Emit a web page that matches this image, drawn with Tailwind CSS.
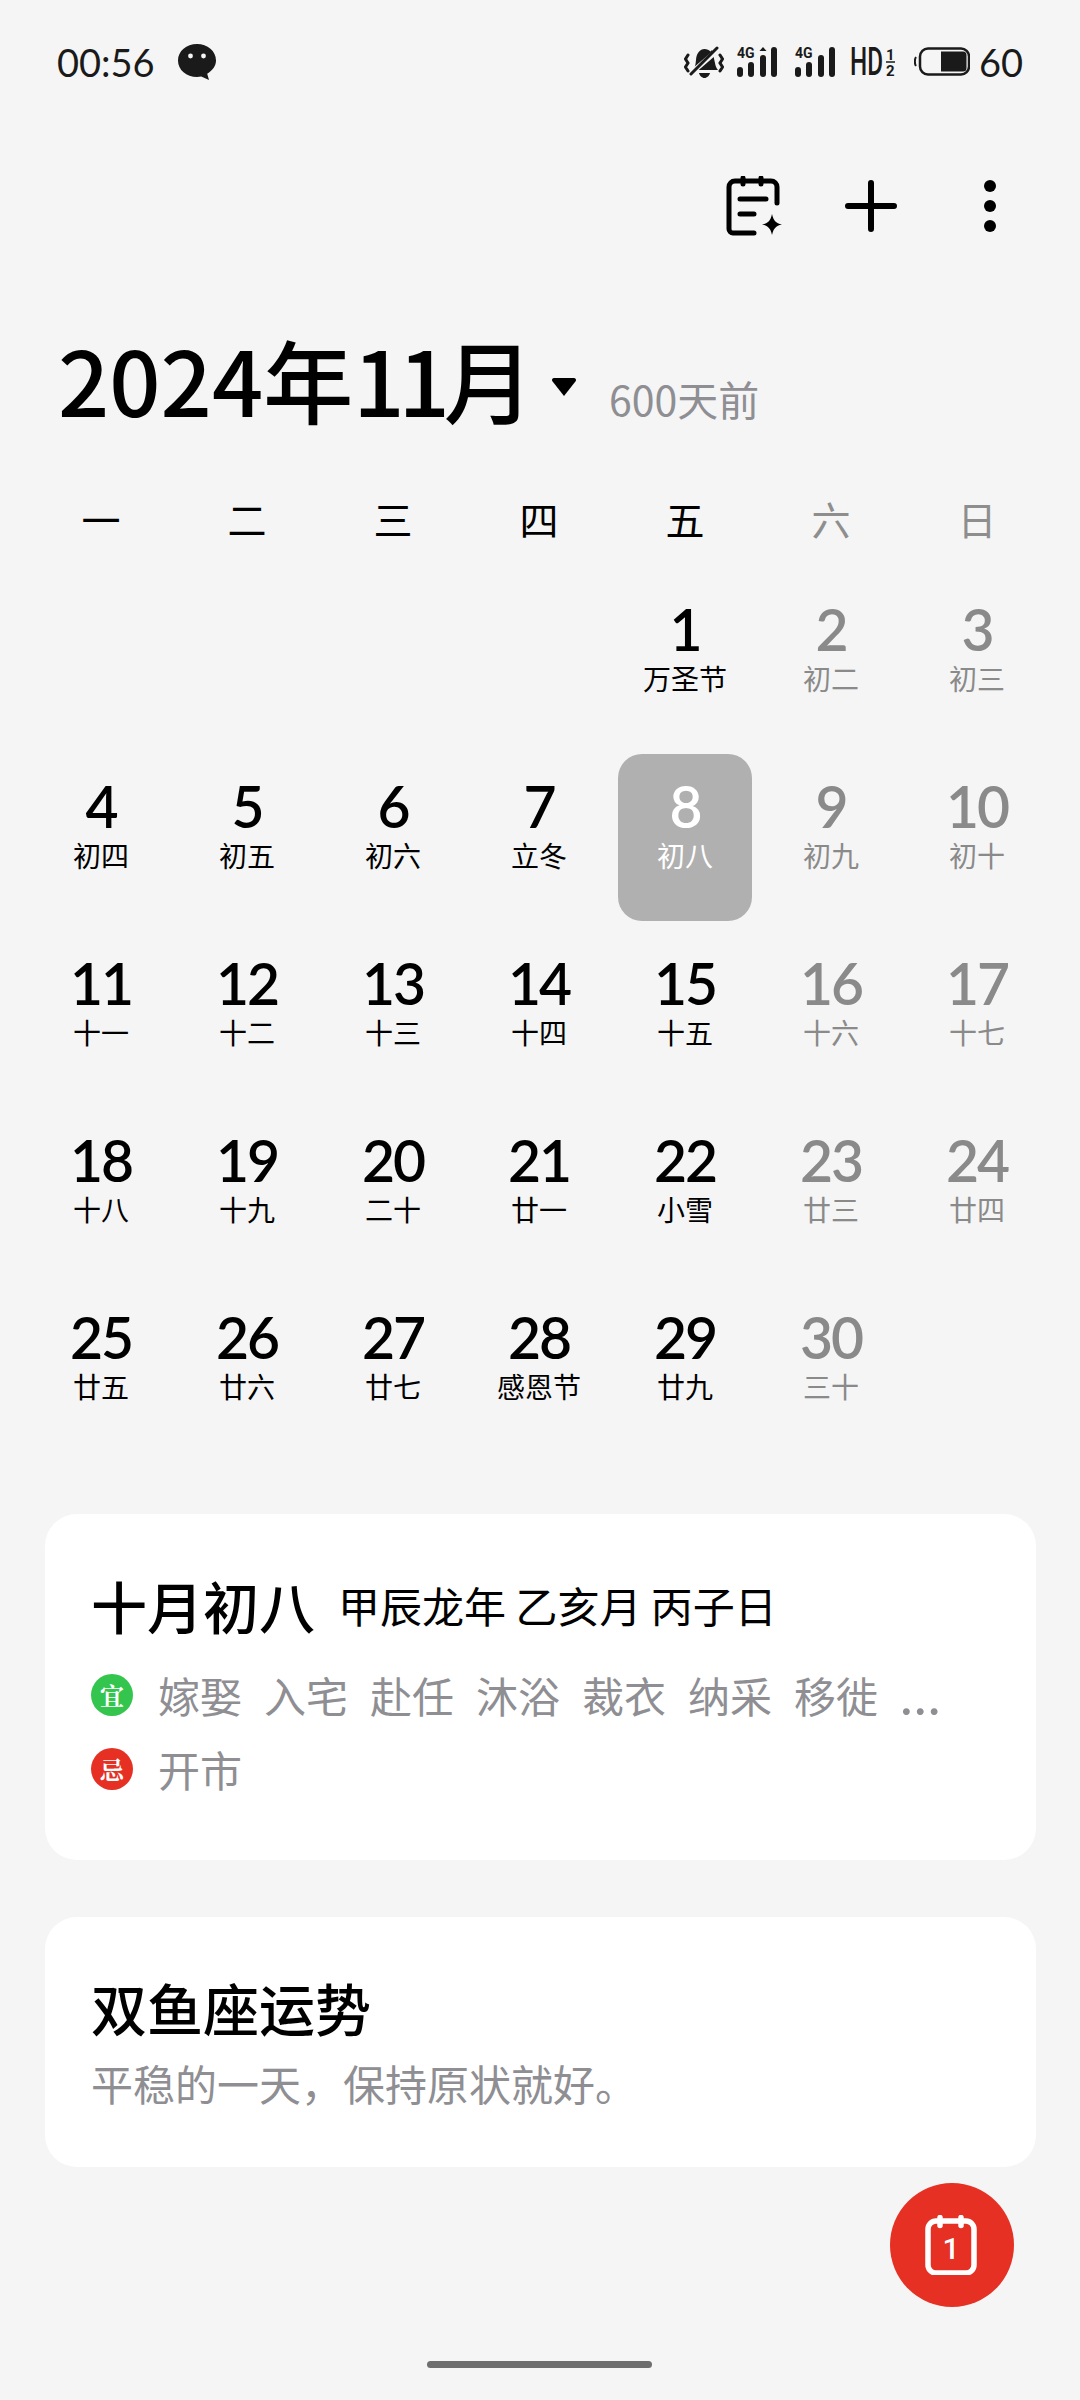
<!doctype html>
<html lang="zh-CN">
<head>
<meta charset="utf-8">
<script src="https://cdn.jsdelivr.net/npm/@tailwindcss/browser@4"></script>
</head>
<body>
<div class="relative w-[1080px] h-[2400px] overflow-hidden bg-[#f5f5f5] text-black font-['Lato','Noto_Sans_CJK_SC',sans-serif]">

  <!-- status bar -->
  <div class="h-[124px] pl-[57px] pr-[57px] flex items-center justify-between text-[#1a1a1a]">
    <div class="flex items-center">
      <span class="text-[38px] leading-none">00:56</span>
      <svg class="ml-[23px]" width="38" height="36" viewBox="0 0 38 36"><path fill="#1a1a1a" d="M19 0C8.500 0 0 7 0 16.500S8.500 33 19 33c1.500 0 3-.2 4.300-.5L31 36l-1.800-6.300C34.500 26.500 38 22 38 16.500 38 7 29.500 0 19 0Z"/><circle cx="12.500" cy="12" r="2.400" fill="#f5f5f5"/><circle cx="25.500" cy="12" r="2.400" fill="#f5f5f5"/></svg>
    </div>
    <div class="flex items-center">
      <svg width="40" height="33" viewBox="0 0 40 33" fill="none"><path fill="#1a1a1a" d="M9 24c2-2 2.500-5 3-10C12.500 7 16 3 20.500 3c2.500 0 4.500 1 6 2.500L28 4l3 13c.5 3 1.500 5.500 3 7ZM15 27h11c-.5 2.500-3 5-5.500 5S15.500 29.500 15 27Z"/><path stroke="#f5f5f5" stroke-width="5" d="M5 29 35 3"/><path stroke="#1a1a1a" stroke-width="3" stroke-linecap="round" d="M7 28 33 2"/><path stroke="#1a1a1a" stroke-width="3" stroke-linecap="round" d="M4 9 1.500 13 4 17 1.500 21 4 25M36 9l2.500 4L36 17l2.500 4L36 25"/></svg>
      <svg class="ml-[13px]" width="41" height="32" viewBox="0 0 41 32"><text x="0" y="12" font-family="Roboto" font-weight="700" font-size="14" fill="#1a1a1a">4G</text><rect x="0" y="21" width="6" height="10" rx="3" fill="#1a1a1a"/><rect x="11" y="16" width="6" height="15" rx="3" fill="#1a1a1a"/><rect x="23" y="9" width="6" height="22" rx="3" fill="#1a1a1a"/><path d="M26 1l3.500 4h-7Z" fill="#1a1a1a"/><rect x="34" y="1" width="6" height="30" rx="3" fill="#1a1a1a"/></svg>
      <svg class="ml-[17px]" width="41" height="32" viewBox="0 0 41 32"><text x="0" y="12" font-family="Roboto" font-weight="700" font-size="14" fill="#1a1a1a">4G</text><rect x="0" y="21" width="6" height="10" rx="3" fill="#1a1a1a"/><rect x="11" y="16" width="6" height="15" rx="3" fill="#1a1a1a"/><rect x="23" y="9" width="6" height="22" rx="3" fill="#1a1a1a"/><rect x="34" y="1" width="6" height="30" rx="3" fill="#1a1a1a"/></svg>
      <svg class="ml-[14px] overflow-visible" width="46" height="30" viewBox="0 0 46 30"><text x="0" y="28" font-family="Roboto" font-weight="500" font-size="38" textLength="33" lengthAdjust="spacingAndGlyphs" fill="#1a1a1a">HD</text><text x="36" y="13" font-family="Roboto" font-weight="700" font-size="15" fill="#1a1a1a">1</text><path d="M36 15h9" stroke="#1a1a1a" stroke-width="1.500"/><text x="36" y="29" font-family="Roboto" font-weight="700" font-size="15" fill="#1a1a1a">2</text></svg>
      <svg class="ml-[18px]" width="56" height="30" viewBox="0 0 56 30" fill="none"><rect x="6" y="1.500" width="49" height="26" rx="8" stroke="#1a1a1a" stroke-width="2.500"/><path d="M27 4.500h22a3.500 3.500 0 0 1 3.500 3.500v13a3.500 3.500 0 0 1-3.500 3.500H27Z" fill="#1a1a1a"/><path d="M2 10c-1.500 2-1.500 7 0 9" stroke="#1a1a1a" stroke-width="2"/></svg>
      <span class="ml-[9px] text-[38px] leading-none">60</span>
    </div>
  </div>

  <!-- toolbar -->
  <div class="mt-[50px] h-[64px] pl-[726px] flex items-center">
    <svg width="58" height="60" viewBox="0 0 58 60" fill="none" stroke="#000" stroke-width="5" stroke-linecap="round">
      <path d="M51 27V11a6 6 0 0 0-6-6H9a6 6 0 0 0-6 6v42a4 4 0 0 0 4 4h21"/>
      <path d="M17 2v6M35 2v6M14 23h26M14 38h14"/>
      <path d="M46 38c1.500 6.500 3.500 9 10 10.500-6.500 1.500-8.500 4-10 10.500-1.500-6.500-3.500-9-10-10.500 6.500-1.500 8.500-4 10-10.500Z" fill="#000" stroke="none"/>
    </svg>
    <svg class="ml-[60px]" width="54" height="54" viewBox="0 0 54 54" fill="none" stroke="#000" stroke-width="6" stroke-linecap="round"><path d="M27 4v46M4 27h46"/></svg>
    <svg class="ml-[85px]" width="14" height="54" viewBox="0 0 14 54" fill="#000"><circle cx="7" cy="7" r="6"/><circle cx="7" cy="27" r="6"/><circle cx="7" cy="47" r="6"/></svg>
  </div>

  <!-- title -->
  <div class="mt-[94px] h-[103px] pl-[58px] relative">
    <span class="block text-[90px] leading-[92px] font-medium font-['Noto_Sans_CJK_SC',sans-serif]">2024年<span class="tracking-[-6px]">11月</span></span>
    <svg class="absolute left-[551px] top-[45px]" width="26" height="20" viewBox="0 0 26 20"><path d="M3 1h20c1.500 0 2.500 1.500 1.800 3L13 19 1.200 4C.5 2.500 1.500 1 3 1Z" fill="#000"/></svg>
    <span class="absolute left-[609px] top-[36px] text-[41px] leading-[60px] text-[#8e8e93] font-['Noto_Sans_CJK_SC',sans-serif]">600天前</span>
  </div>

  <!-- weekdays -->
  <div class="mt-[53px] pl-[28px] pr-[30px] grid grid-cols-7 h-[60px] items-center text-center text-[39px] leading-[60px] font-['Noto_Sans_CJK_SC',sans-serif]">
    <div>一</div><div>二</div><div>三</div><div>四</div><div>五</div>
    <div class="text-[#8e8e8e]">六</div><div class="text-[#8e8e8e]">日</div>
  </div>

  <!-- days -->
  <div class="mt-[29px] pl-[28px] pr-[30px] grid grid-cols-7 auto-rows-[167px] gap-y-[10px] justify-items-center text-center">
    <div></div><div></div><div></div><div></div>
    <div class="w-[134px] pt-[21px]"><div class="text-[57px] leading-[62px] font-semibold tracking-[-2px]">1</div><div class="text-[28px] leading-[36px] font-['Noto_Sans_CJK_SC',sans-serif]">万圣节</div></div>
    <div class="w-[134px] pt-[21px] text-[#8a8a8a]"><div class="text-[57px] leading-[62px] font-semibold tracking-[-2px]">2</div><div class="text-[28px] leading-[36px] font-['Noto_Sans_CJK_SC',sans-serif]">初二</div></div>
    <div class="w-[134px] pt-[21px] text-[#8a8a8a]"><div class="text-[57px] leading-[62px] font-semibold tracking-[-2px]">3</div><div class="text-[28px] leading-[36px] font-['Noto_Sans_CJK_SC',sans-serif]">初三</div></div>

    <div class="w-[134px] pt-[21px]"><div class="text-[57px] leading-[62px] font-semibold tracking-[-2px]">4</div><div class="text-[28px] leading-[36px] font-['Noto_Sans_CJK_SC',sans-serif]">初四</div></div>
    <div class="w-[134px] pt-[21px]"><div class="text-[57px] leading-[62px] font-semibold tracking-[-2px]">5</div><div class="text-[28px] leading-[36px] font-['Noto_Sans_CJK_SC',sans-serif]">初五</div></div>
    <div class="w-[134px] pt-[21px]"><div class="text-[57px] leading-[62px] font-semibold tracking-[-2px]">6</div><div class="text-[28px] leading-[36px] font-['Noto_Sans_CJK_SC',sans-serif]">初六</div></div>
    <div class="w-[134px] pt-[21px]"><div class="text-[57px] leading-[62px] font-semibold tracking-[-2px]">7</div><div class="text-[28px] leading-[36px] font-['Noto_Sans_CJK_SC',sans-serif]">立冬</div></div>
    <div class="w-[134px] pt-[21px] bg-[#b0b0b0] text-white rounded-[24px]"><div class="text-[57px] leading-[62px] font-semibold tracking-[-2px]">8</div><div class="text-[28px] leading-[36px] font-['Noto_Sans_CJK_SC',sans-serif]">初八</div></div>
    <div class="w-[134px] pt-[21px] text-[#8a8a8a]"><div class="text-[57px] leading-[62px] font-semibold tracking-[-2px]">9</div><div class="text-[28px] leading-[36px] font-['Noto_Sans_CJK_SC',sans-serif]">初九</div></div>
    <div class="w-[134px] pt-[21px] text-[#8a8a8a]"><div class="text-[57px] leading-[62px] font-semibold tracking-[-2px]">10</div><div class="text-[28px] leading-[36px] font-['Noto_Sans_CJK_SC',sans-serif]">初十</div></div>

    <div class="w-[134px] pt-[21px]"><div class="text-[57px] leading-[62px] font-semibold tracking-[-2px]">11</div><div class="text-[28px] leading-[36px] font-['Noto_Sans_CJK_SC',sans-serif]">十一</div></div>
    <div class="w-[134px] pt-[21px]"><div class="text-[57px] leading-[62px] font-semibold tracking-[-2px]">12</div><div class="text-[28px] leading-[36px] font-['Noto_Sans_CJK_SC',sans-serif]">十二</div></div>
    <div class="w-[134px] pt-[21px]"><div class="text-[57px] leading-[62px] font-semibold tracking-[-2px]">13</div><div class="text-[28px] leading-[36px] font-['Noto_Sans_CJK_SC',sans-serif]">十三</div></div>
    <div class="w-[134px] pt-[21px]"><div class="text-[57px] leading-[62px] font-semibold tracking-[-2px]">14</div><div class="text-[28px] leading-[36px] font-['Noto_Sans_CJK_SC',sans-serif]">十四</div></div>
    <div class="w-[134px] pt-[21px]"><div class="text-[57px] leading-[62px] font-semibold tracking-[-2px]">15</div><div class="text-[28px] leading-[36px] font-['Noto_Sans_CJK_SC',sans-serif]">十五</div></div>
    <div class="w-[134px] pt-[21px] text-[#8a8a8a]"><div class="text-[57px] leading-[62px] font-semibold tracking-[-2px]">16</div><div class="text-[28px] leading-[36px] font-['Noto_Sans_CJK_SC',sans-serif]">十六</div></div>
    <div class="w-[134px] pt-[21px] text-[#8a8a8a]"><div class="text-[57px] leading-[62px] font-semibold tracking-[-2px]">17</div><div class="text-[28px] leading-[36px] font-['Noto_Sans_CJK_SC',sans-serif]">十七</div></div>

    <div class="w-[134px] pt-[21px]"><div class="text-[57px] leading-[62px] font-semibold tracking-[-2px]">18</div><div class="text-[28px] leading-[36px] font-['Noto_Sans_CJK_SC',sans-serif]">十八</div></div>
    <div class="w-[134px] pt-[21px]"><div class="text-[57px] leading-[62px] font-semibold tracking-[-2px]">19</div><div class="text-[28px] leading-[36px] font-['Noto_Sans_CJK_SC',sans-serif]">十九</div></div>
    <div class="w-[134px] pt-[21px]"><div class="text-[57px] leading-[62px] font-semibold tracking-[-2px]">20</div><div class="text-[28px] leading-[36px] font-['Noto_Sans_CJK_SC',sans-serif]">二十</div></div>
    <div class="w-[134px] pt-[21px]"><div class="text-[57px] leading-[62px] font-semibold tracking-[-2px]">21</div><div class="text-[28px] leading-[36px] font-['Noto_Sans_CJK_SC',sans-serif]">廿一</div></div>
    <div class="w-[134px] pt-[21px]"><div class="text-[57px] leading-[62px] font-semibold tracking-[-2px]">22</div><div class="text-[28px] leading-[36px] font-['Noto_Sans_CJK_SC',sans-serif]">小雪</div></div>
    <div class="w-[134px] pt-[21px] text-[#8a8a8a]"><div class="text-[57px] leading-[62px] font-semibold tracking-[-2px]">23</div><div class="text-[28px] leading-[36px] font-['Noto_Sans_CJK_SC',sans-serif]">廿三</div></div>
    <div class="w-[134px] pt-[21px] text-[#8a8a8a]"><div class="text-[57px] leading-[62px] font-semibold tracking-[-2px]">24</div><div class="text-[28px] leading-[36px] font-['Noto_Sans_CJK_SC',sans-serif]">廿四</div></div>

    <div class="w-[134px] pt-[21px]"><div class="text-[57px] leading-[62px] font-semibold tracking-[-2px]">25</div><div class="text-[28px] leading-[36px] font-['Noto_Sans_CJK_SC',sans-serif]">廿五</div></div>
    <div class="w-[134px] pt-[21px]"><div class="text-[57px] leading-[62px] font-semibold tracking-[-2px]">26</div><div class="text-[28px] leading-[36px] font-['Noto_Sans_CJK_SC',sans-serif]">廿六</div></div>
    <div class="w-[134px] pt-[21px]"><div class="text-[57px] leading-[62px] font-semibold tracking-[-2px]">27</div><div class="text-[28px] leading-[36px] font-['Noto_Sans_CJK_SC',sans-serif]">廿七</div></div>
    <div class="w-[134px] pt-[21px]"><div class="text-[57px] leading-[62px] font-semibold tracking-[-2px]">28</div><div class="text-[28px] leading-[36px] font-['Noto_Sans_CJK_SC',sans-serif]">感恩节</div></div>
    <div class="w-[134px] pt-[21px]"><div class="text-[57px] leading-[62px] font-semibold tracking-[-2px]">29</div><div class="text-[28px] leading-[36px] font-['Noto_Sans_CJK_SC',sans-serif]">廿九</div></div>
    <div class="w-[134px] pt-[21px] text-[#8a8a8a]"><div class="text-[57px] leading-[62px] font-semibold tracking-[-2px]">30</div><div class="text-[28px] leading-[36px] font-['Noto_Sans_CJK_SC',sans-serif]">三十</div></div>
    <div></div>
  </div>

  <!-- almanac card -->
  <div class="mt-[62px] ml-[45px] mr-[44px] h-[346px] bg-white rounded-[32px] pl-[46px] pt-[55px] font-['Noto_Sans_CJK_SC',sans-serif]">
    <div class="flex items-center h-[72px]">
      <span class="text-[56px] leading-[72px] font-medium">十月初八</span>
      <span class="ml-[23px] text-[42px] leading-[72px]">甲辰龙年 乙亥月 丙子日</span>
    </div>
    <div class="mt-[24px] flex items-center h-[60px]">
      <span class="w-[42px] h-[42px] shrink-0 rounded-full bg-[#34c54f] text-white text-[24px] leading-[42px] text-center font-['Noto_Serif_CJK_SC','Noto_Sans_CJK_SC',serif] font-bold">宜</span>
      <div class="ml-[25px] flex gap-x-[22px] text-[42px] leading-[60px] text-[#8e8e93]">
        <span>嫁娶</span><span>入宅</span><span>赴任</span><span>沐浴</span><span>裁衣</span><span>纳采</span><span>移徙</span><span class="text-[54px] font-['Lato']">…</span>
      </div>
    </div>
    <div class="mt-[14px] flex items-center h-[60px]">
      <span class="w-[42px] h-[42px] shrink-0 rounded-full bg-[#e53023] text-white text-[24px] leading-[42px] text-center font-['Noto_Serif_CJK_SC','Noto_Sans_CJK_SC',serif] font-bold">忌</span>
      <div class="ml-[25px] text-[42px] leading-[60px] text-[#8e8e93]">开市</div>
    </div>
  </div>

  <!-- horoscope card -->
  <div class="mt-[57px] ml-[45px] mr-[44px] h-[250px] bg-white rounded-[32px] pl-[46px] pt-[54px] font-['Noto_Sans_CJK_SC',sans-serif]">
    <div class="text-[56px] leading-[72px] font-medium">双鱼座运势</div>
    <div class="text-[42px] leading-[60px] mt-[10px] text-[#8e8e93]">平稳的一天，保持原状就好。</div>
  </div>

  <!-- floating action button -->
  <div class="absolute left-[890px] top-[2183px] w-[124px] h-[124px] rounded-full bg-[#e53023] flex items-center justify-center">
    <svg width="54" height="60" viewBox="0 0 54 60" fill="none" stroke="#fff" stroke-width="5.500" stroke-linecap="round">
      <rect x="3" y="6" width="46" height="52" rx="8"/>
      <path d="M15 2.500v8M36 2.500v8"/>
      <text x="26" y="44" text-anchor="middle" font-family="Roboto" font-weight="500" font-size="30" fill="#fff" stroke="none">1</text>
    </svg>
  </div>

  <!-- home indicator -->
  <div class="absolute left-[427px] top-[2361px] w-[225px] h-[7px] rounded-full bg-[#6e6e6e]"></div>
</div>
</body>
</html>
